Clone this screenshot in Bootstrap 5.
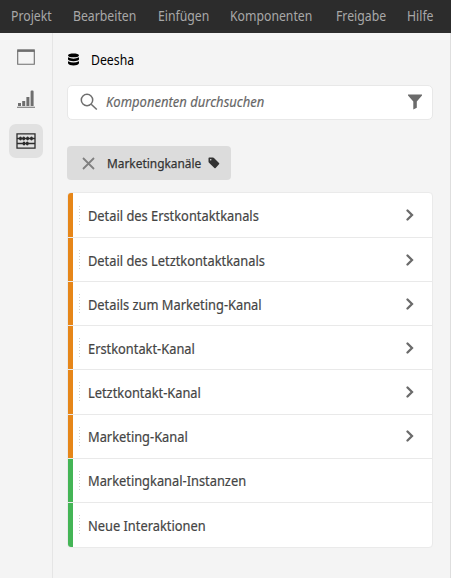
<!DOCTYPE html>
<html lang="de">
<head>
<meta charset="utf-8">
<meta name="viewport" content="width=device-width, initial-scale=1">
<title>Komponenten</title>
<link href="https://cdn.jsdelivr.net/npm/bootstrap@5.3.0/dist/css/bootstrap.min.css" rel="stylesheet">
<style>
body{font-family:"Noto Sans",sans-serif;font-size:14px;line-height:20px;background:#f4f4f4;color:#444;height:578px;overflow:hidden}
svg{display:block;flex:none}
.txt{display:inline-block;white-space:nowrap;transform:scaleX(.875);transform-origin:0 50%}
.top-menu{display:grid;grid-template-columns:62.5px 84.5px 72.5px 106px 71px 40px;height:33px;background:#2c2c2c;padding:0 0 2px 10.5px;align-items:center}
.top-menu a{color:#a8a8a8;text-decoration:none;width:0}
.rail{width:53px;border-right:1px solid #e5e5e5;padding-top:7px}
.tool{width:34px;height:34px;border-radius:7px;margin-left:-1px;margin-bottom:8px;border:0;padding:0;background:none;color:#6e6e6e}
.tool.on{background:#e1e1e1;color:#2c2c2c}
.panel{padding:0 17px 0 14px;border-right:1px solid #dedede}
.source{height:52px;color:#000;gap:11px;padding-top:1px}
.search{height:35px;border:1px solid #e8e8e8;border-radius:5px;background:#fff;padding:0 10px 2px 12px}
.search .txt{font-style:italic;color:#666;margin-left:8px;transform:scaleX(.93);-webkit-text-stroke:.15px #666}
.tag{height:34px;width:164px;border-radius:4px;background:#dcdcdc;margin-top:26px;padding-left:15px;font-size:13px;color:#333;-webkit-text-stroke:.25px #333}
.tag-name{width:101px;margin-left:12px}
.tag .txt{transform:scaleX(.915)}
.items{margin-top:12px;height:356px;border:1px solid #eaeaea;border-radius:4px;overflow:hidden;display:grid;grid-template-rows:45px repeat(7,1fr);background:#fff}
.item{border-bottom:1px solid #e9e9e9;-webkit-text-stroke:.2px #444;padding-right:18px;min-height:0}
.item:last-child{border-bottom:0}
.item .txt{transform:translateY(.5px) scaleX(.917)}
.stripe{width:5px;align-self:stretch;background:#e68619;flex:none}
.metric .stripe{background:#44b556}
.grip{width:1px;height:19px;margin:0 8px 0 6px;background:repeating-linear-gradient(#d2d2d2 0 1px,transparent 1px 3px)}
</style>
<script src="https://cdn.jsdelivr.net/npm/bootstrap@5.3.0/dist/js/bootstrap.bundle.min.js"></script>
</head>
<body class="d-flex flex-column">
<nav class="top-menu">
<a href="#"><span class="txt">Projekt</span></a><a href="#"><span class="txt">Bearbeiten</span></a><a href="#"><span class="txt">Einfügen</span></a><a href="#"><span class="txt">Komponenten</span></a><a href="#"><span class="txt">Freigabe</span></a><a href="#"><span class="txt">Hilfe</span></a>
</nav>
<div class="d-flex flex-grow-1">
<aside class="rail d-flex flex-column align-items-center flex-shrink-0">
<button class="tool d-flex align-items-center justify-content-center" aria-label="Bedienfelder"><svg width="18" height="16" viewBox="0 0 18 16" fill="none" stroke="currentColor"><path d="M.7 1.5v13.800h16.600V1.500" stroke-width="1.100"/><path d="M.2 1.600h17.600" stroke-width="2.600"/></svg></button>
<button class="tool d-flex align-items-center justify-content-center" aria-label="Visualisierungen"><svg width="18" height="18" viewBox="0 0 18 18" fill="currentColor"><path d="M1 13h3v3H1zM5.200 11h3v5h-3zM9.400 7h3v9h-3zM13.600 1.500q0-1 1-1h1q1 0 1 1V16h-3zM0 16.700h18v1H0z"/></svg></button>
<button class="tool on d-flex align-items-center justify-content-center" aria-label="Komponenten"><svg width="20" height="16" viewBox="0 0 20 16"><path d="M1 .8h18v14.400H1zM1 5.500h18M1 10.500h18" fill="none" stroke="currentColor" stroke-width="1.300"/><g fill="currentColor"><ellipse cx="4.500" cy="5.500" rx="1.400" ry="2"/><ellipse cx="7.700" cy="5.500" rx="1.400" ry="2"/><ellipse cx="11.600" cy="5.500" rx="1.400" ry="2"/><ellipse cx="15.500" cy="5.500" rx="1.400" ry="2"/><ellipse cx="8" cy="10.500" rx="1.400" ry="2"/><ellipse cx="11.300" cy="10.500" rx="1.400" ry="2"/></g></svg></button>
</aside>
<main class="panel flex-grow-1">
<div class="source d-flex align-items-center"><svg width="13" height="13" viewBox="0 0 13 13"><path d="M1 2.400C1-.2 12-.2 12 2.400S1 5 1 2.400zM1 4.300Q6.500 7 12 4.300v2.200C11 8.700 2 8.700 1 6.500zM1 8.200q5.500 2.700 11 0v2c-1 3-10 3-11 0z"/></svg><span class="txt">Deesha</span></div>
<div class="search d-flex align-items-center"><svg width="18" height="18" viewBox="0 0 18 18" fill="none" stroke="#6e6e6e" stroke-width="1.500"><circle cx="7" cy="7" r="5.700"/><path d="m11.200 11.200 5.600 5.300"/></svg><span class="txt">Komponenten durchsuchen</span><svg class="ms-auto" width="14" height="16" viewBox="0 0 14 16"><path d="M0 .5h14v1L8.800 7.500v6.200L5.300 15.500v-8L0 1.500z" fill="#6b6b6b"/></svg></div>
<div class="tag d-flex align-items-center"><svg width="13" height="13" viewBox="0 0 13 13"><path d="m1 1 11 11M12 1 1 12" stroke="#808080" stroke-width="1.800"/></svg><span class="tag-name"><span class="txt">Marketingkanäle</span></span><svg width="12" height="12" viewBox="0 0 12 12"><path fill-rule="evenodd" d="M.5 1.300Q.5.500 1.300.500H5q.6 0 1 .4l5 5q.7.600 0 1.300L7.600 10.900q-.6.600-1.200 0l-5.400-5.200q-.5-.5-.5-1zM2.700 1.900a.8.8 0 1 0 .01 1.600.8.8 0 0 0 0-1.600z" fill="#333"/></svg></div>
<div class="items">
<div class="item d-flex align-items-center"><i class="stripe"></i><i class="grip"></i><span class="txt">Detail des Erstkontaktkanals</span><svg class="ms-auto" width="8" height="12" viewBox="0 0 8 12"><path d="m1.500 1.500 4.500 4.500-4.500 4.500" fill="none" stroke="#6b6b6b" stroke-width="2.300" stroke-linecap="round"/></svg></div>
<div class="item d-flex align-items-center"><i class="stripe"></i><i class="grip"></i><span class="txt">Detail des Letztkontaktkanals</span><svg class="ms-auto" width="8" height="12" viewBox="0 0 8 12"><path d="m1.500 1.500 4.500 4.500-4.500 4.500" fill="none" stroke="#6b6b6b" stroke-width="2.300" stroke-linecap="round"/></svg></div>
<div class="item d-flex align-items-center"><i class="stripe"></i><i class="grip"></i><span class="txt">Details zum Marketing-Kanal</span><svg class="ms-auto" width="8" height="12" viewBox="0 0 8 12"><path d="m1.500 1.500 4.500 4.500-4.500 4.500" fill="none" stroke="#6b6b6b" stroke-width="2.300" stroke-linecap="round"/></svg></div>
<div class="item d-flex align-items-center"><i class="stripe"></i><i class="grip"></i><span class="txt">Erstkontakt-Kanal</span><svg class="ms-auto" width="8" height="12" viewBox="0 0 8 12"><path d="m1.500 1.500 4.500 4.500-4.500 4.500" fill="none" stroke="#6b6b6b" stroke-width="2.300" stroke-linecap="round"/></svg></div>
<div class="item d-flex align-items-center"><i class="stripe"></i><i class="grip"></i><span class="txt">Letztkontakt-Kanal</span><svg class="ms-auto" width="8" height="12" viewBox="0 0 8 12"><path d="m1.500 1.500 4.500 4.500-4.500 4.500" fill="none" stroke="#6b6b6b" stroke-width="2.300" stroke-linecap="round"/></svg></div>
<div class="item d-flex align-items-center"><i class="stripe"></i><i class="grip"></i><span class="txt">Marketing-Kanal</span><svg class="ms-auto" width="8" height="12" viewBox="0 0 8 12"><path d="m1.500 1.500 4.500 4.500-4.500 4.500" fill="none" stroke="#6b6b6b" stroke-width="2.300" stroke-linecap="round"/></svg></div>
<div class="item metric d-flex align-items-center"><i class="stripe"></i><i class="grip"></i><span class="txt">Marketingkanal-Instanzen</span></div>
<div class="item metric d-flex align-items-center"><i class="stripe"></i><i class="grip"></i><span class="txt">Neue Interaktionen</span></div>
</div>
</main>
</div>
</body>
</html>
